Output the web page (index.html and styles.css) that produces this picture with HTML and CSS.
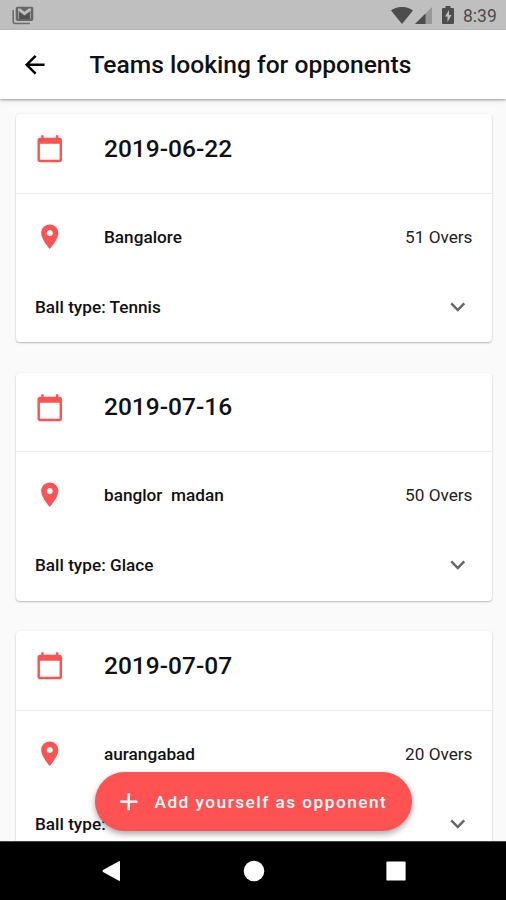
FILE: index.html
```html
<!DOCTYPE html>
<html lang="en">
<head>
<meta charset="utf-8">
<title>Teams looking for opponents</title>
<link rel="stylesheet" href="styles.css">
</head>
<body>
<svg width="0" height="0" class="defs">
  <symbol id="calendar" viewBox="0 0 24 24"><path d="M20 3h-1V1h-2v2H7V1H5v2H4c-1.100 0-2 .9-2 2v16c0 1.100.9 2 2 2h16c1.100 0 2-.9 2-2V5c0-1.100-.9-2-2-2zm0 18H4V8h16v13z"/></symbol>
  <symbol id="place" viewBox="0 0 24 24"><path d="M12 2C8.130 2 5 5.130 5 9c0 5.250 7 13 7 13s7-7.750 7-13c0-3.870-3.130-7-7-7zm0 9.500c-1.380 0-2.500-1.120-2.500-2.500s1.120-2.500 2.500-2.500 2.500 1.120 2.500 2.500-1.120 2.500-2.500 2.500z"/></symbol>
  <symbol id="expand" viewBox="0 0 24 24"><path d="M16.590 8.590L12 13.170 7.410 8.590 6 10l6 6 6-6z"/></symbol>
</svg>
<div class="screen">
  <header class="status">
    <svg class="mail" viewBox="0 0 22 19"><path d="M1.200 4v11.500a2 2 0 0 0 2 2H18" fill="none" stroke="#6c6c6c" stroke-width="1.600"/><rect x="3.700" y=".7" width="17.600" height="14.300" rx="2" fill="#666"/><path d="M6 2.500h2.200l4.300 3.200 4.300-3.200H19v2l-6.500 4.700L6 4.500z" fill="#bfbfbf"/><path d="M6.500 5v8M18.500 5v8" stroke="#999" stroke-width="1"/><path d="M7.500 6.500l5 3.700 5-3.700V13h-10z" fill="#505050"/></svg>
    <div class="status-right">
      <svg class="wifi" viewBox="0 0 22 17"><path d="M0 3.500C6.500-1.200 15.500-1.200 22 3.500L11 17z" fill="#4d4d4d"/></svg>
      <svg class="signal" viewBox="0 0 17 17"><path d="M17 0v17H0z" fill="#999"/><path d="M10.500 6.500V17H0z" fill="#4d4d4d"/></svg>
      <svg class="battery" viewBox="0 0 12 18"><path d="M3.500 0h5v2H11q1 0 1 1v14q0 1-1 1H1q-1 0-1-1V3q0-1 1-1h2.500z" fill="#4d4d4d"/><path d="M7 4L3 10.500h2.500V16L9.500 9H7z" fill="#bfbfbf"/></svg>
      <span class="time">8:39</span>
    </div>
  </header>
  <div class="appbar">
    <svg class="back" viewBox="0 0 24 24"><path d="M20 11H7.830l5.590-5.590L12 4l-8 8 8 8 1.410-1.410L7.830 13H20v-2z"/></svg>
    <h1>Teams looking for opponents</h1>
  </div>
  <main class="list">
    <article class="card">
      <div class="row date"><svg class="icon red"><use href="#calendar"/></svg><h2>2019-06-22</h2></div>
      <div class="row place"><svg class="icon red"><use href="#place"/></svg><b>Bangalore</b><span class="overs">51 Overs</span></div>
      <div class="row ball"><b>Ball type: Tennis</b><svg class="icon expand"><use href="#expand"/></svg></div>
    </article>
    <article class="card">
      <div class="row date"><svg class="icon red"><use href="#calendar"/></svg><h2>2019-07-16</h2></div>
      <div class="row place"><svg class="icon red"><use href="#place"/></svg><b>banglor&nbsp; madan</b><span class="overs">50 Overs</span></div>
      <div class="row ball"><b>Ball type: Glace</b><svg class="icon expand"><use href="#expand"/></svg></div>
    </article>
    <article class="card">
      <div class="row date"><svg class="icon red"><use href="#calendar"/></svg><h2>2019-07-07</h2></div>
      <div class="row place"><svg class="icon red"><use href="#place"/></svg><b>aurangabad</b><span class="overs">20 Overs</span></div>
      <div class="row ball"><b>Ball type:</b><svg class="icon expand"><use href="#expand"/></svg></div>
    </article>
  </main>
  <button class="fab"><svg class="plus" viewBox="0 0 24 24"><path d="M19 13h-6v6h-2v-6H5v-2h6V5h2v6h6v2z"/></svg><span>Add yourself as opponent</span></button>
  <nav class="navbar">
    <svg viewBox="0 0 24 24"><path d="M21 2.800v18.400q0 1.200-1.100.6L4 13q-1.300-1 0-2l15.900-8.800q1.100-.600 1.100.600z"/></svg>
    <svg viewBox="0 0 24 24"><circle cx="12" cy="12" r="10.300"/></svg>
    <svg viewBox="0 0 24 24"><rect x="2.400" y="2.400" width="19.200" height="19.200" rx="1.200"/></svg>
  </nav>
</div>
</body>
</html>
```

FILE: styles.css
```css
* { box-sizing: border-box; }
body { margin: 0; font-family: Roboto, "Liberation Sans", sans-serif; color: #111; }
svg { display: block; flex: none; }
.defs { position: absolute; }
.screen { position: relative; width: 506px; height: 900px; display: flex; flex-direction: column; overflow: hidden; background: #fafafa; }
.status { flex: none; height: 30px; background: #bfbfbf; display: flex; align-items: center; justify-content: space-between; padding: 0 9px 0 12px; }
.mail { width: 22px; height: 19px; }
.status-right { display: flex; align-items: center; }
.wifi { width: 22px; height: 17px; }
.signal { width: 17px; height: 17px; margin-left: 2px; }
.battery { width: 12px; height: 18px; margin-left: 10px; }
.time { width: 34px; margin-left: 9px; font-size: 17.500px; line-height: 30px; color: #4d4d4d; white-space: nowrap; padding-top: 2px; }
.appbar { flex: none; height: 69px; background: #fff; display: flex; align-items: center; padding-left: 20px; box-shadow: 0 1px 2px rgba(0,0,0,.3), 0 2px 5px rgba(0,0,0,.1); z-index: 1; }
.back { width: 29.500px; height: 29.500px; }
h1 { margin: 0 0 0 40px; font-size: 24.600px; font-weight: 500; line-height: 32px; white-space: nowrap; }
.list { flex: 1; min-height: 0; overflow: hidden; display: flex; flex-direction: column; gap: 30.500px; padding: 15px 14.500px 0 16px; }
.card { flex: none; height: 228px; background: #fff; border-radius: 4px; box-shadow: 0 1px 2px rgba(0,0,0,.25), 0 0 2px rgba(0,0,0,.04); }
.row { display: flex; align-items: center; padding: 0 19px; }
.date { height: 79.500px; border-bottom: 1px solid #eee; padding-bottom: 9px; }
.place { height: 86px; }
.ball { height: 54px; justify-content: space-between; }
.icon { width: 29.500px; height: 29.500px; }
.red { fill: #ff5252; }
.expand { fill: #666; }
h2 { margin: 0 0 0 39.500px; font-size: 24.500px; font-weight: 500; line-height: 30px; }
b { font-size: 17.200px; font-weight: 500; white-space: nowrap; }
.place b { margin-left: 39.500px; }
.overs { margin-left: auto; font-size: 17.200px; color: #222; }
.fab { position: absolute; left: 95px; top: 772px; width: 317px; height: 59px; border: 0; border-radius: 30px; background: #ff5252; color: #fff; display: flex; align-items: center; padding: 0 0 0 19px; font: 500 17.200px/24px Roboto, sans-serif; letter-spacing: 1.500px; white-space: nowrap; box-shadow: 0 3px 6px rgba(0,0,0,.35); z-index: 2; }
.plus { width: 29.500px; height: 29.500px; margin-right: 11px; fill: #fff; }
.navbar { flex: none; height: 59px; background: #000; display: flex; align-items: center; justify-content: space-between; padding: 0 98px 0 99px; border-top: 1px solid #444; }
.navbar svg { width: 24px; height: 24px; fill: #fff; }
```
